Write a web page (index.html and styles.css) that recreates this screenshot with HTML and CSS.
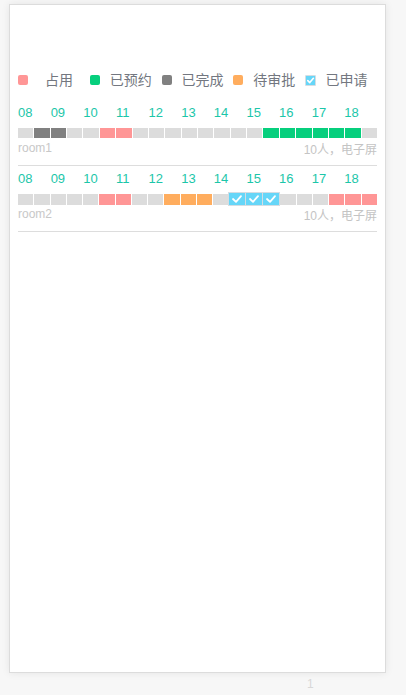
FILE: index.html
```html
<!DOCTYPE html>
<html lang="zh">
<head>
<meta charset="utf-8">
<title>会议室预约</title>
<link rel="stylesheet" href="styles.css">
</head>
<body>
<div class="page">
  <div class="card">
    <div class="legend">
      <div class="legend-item"><span class="sw sw-busy"></span><span class="lbl">占用</span></div>
      <div class="legend-item"><span class="sw sw-booked"></span><span class="lbl">已预约</span></div>
      <div class="legend-item"><span class="sw sw-done"></span><span class="lbl">已完成</span></div>
      <div class="legend-item"><span class="sw sw-pending"></span><span class="lbl">待审批</span></div>
      <div class="legend-item"><span class="sw sw-applied"><svg viewBox="0 0 10 10" class="chk-s"><polyline points="2,5.2 4.2,7.3 8.2,2.6" /></svg></span><span class="lbl">已申请</span></div>
    </div>

    <div class="room">
      <div class="hours">
        <span>08</span><span>09</span><span>10</span><span>11</span><span>12</span><span>13</span><span>14</span><span>15</span><span>16</span><span>17</span><span>18</span>
      </div>
      <div class="bar">
        <span class="seg"></span><span class="seg done"></span><span class="seg done"></span><span class="seg"></span><span class="seg"></span><span class="seg busy"></span><span class="seg busy"></span><span class="seg"></span><span class="seg"></span><span class="seg"></span><span class="seg"></span><span class="seg"></span><span class="seg"></span><span class="seg"></span><span class="seg"></span><span class="seg booked"></span><span class="seg booked"></span><span class="seg booked"></span><span class="seg booked"></span><span class="seg booked"></span><span class="seg booked"></span><span class="seg"></span>
      </div>
      <div class="info"><span class="name">room1</span><span class="desc">10人，电子屏</span></div>
    </div>

    <div class="room">
      <div class="hours">
        <span>08</span><span>09</span><span>10</span><span>11</span><span>12</span><span>13</span><span>14</span><span>15</span><span>16</span><span>17</span><span>18</span>
      </div>
      <div class="bar">
        <span class="seg"></span><span class="seg"></span><span class="seg"></span><span class="seg"></span><span class="seg"></span><span class="seg busy"></span><span class="seg busy"></span><span class="seg"></span><span class="seg"></span><span class="seg pending"></span><span class="seg pending"></span><span class="seg pending"></span><span class="seg"></span>
        <span class="seg applied"><svg viewBox="0 0 16 10" class="chk"><polyline points="4,5 7,7.8 12,2.2" /></svg></span>
        <span class="seg applied"><svg viewBox="0 0 16 10" class="chk"><polyline points="4,5 7,7.8 12,2.2" /></svg></span>
        <span class="seg applied"><svg viewBox="0 0 16 10" class="chk"><polyline points="4,5 7,7.8 12,2.2" /></svg></span>
        <span class="seg"></span><span class="seg"></span><span class="seg"></span><span class="seg busy"></span><span class="seg busy"></span><span class="seg busy"></span>
      </div>
      <div class="info"><span class="name">room2</span><span class="desc">10人，电子屏</span></div>
    </div>
  </div>
  <div class="pager">1</div>
</div>
</body>
</html>
```
FILE: styles.css
```css
html, body {
  margin: 0;
  padding: 0;
  background: #f7f7f7;
}

body {
  font-family: "Liberation Sans", "Noto Sans CJK SC", sans-serif;
}

.page {
  padding: 4px 0 0 9px;
}

.card {
  box-sizing: border-box;
  width: 377px;
  height: 669px;
  background: #fff;
  border: 1px solid #dcdcdc;
  box-shadow: 0 0 8px rgba(0, 0, 0, 0.08);
  padding: 65px 8px 0 8px;
}

.legend {
  display: flex;
  height: 20px;
  margin-bottom: 10px;
}

.legend-item {
  display: flex;
  align-items: center;
  width: 72px;
  flex-shrink: 1;
}

.sw {
  width: 10px;
  height: 10px;
  border-radius: 2px;
  flex: none;
  box-sizing: border-box;
}

.sw-busy { background: #ff9696; }
.sw-booked { background: #06cf7d; }
.sw-done { background: #808080; }
.sw-pending { background: #ffad5e; }
.sw-applied {
  width: 11px;
  height: 11px;
  border-radius: 1px;
  background: #66d6f8;
  border: 1px solid #d6dde2;
  display: flex;
}

.chk-s {
  width: 9px;
  height: 9px;
}

.chk-s polyline, .chk polyline {
  fill: none;
  stroke: #fff;
  stroke-width: 1.8;
  stroke-linecap: round;
  stroke-linejoin: round;
}

.lbl {
  flex: 1;
  text-align: center;
  font-size: 14px;
  line-height: 20px;
  color: #737780;
  white-space: nowrap;
}

.room {
  padding: 4px 0 7px 0;
  border-bottom: 1px solid #dddddd;
}

.hours {
  display: grid;
  grid-template-columns: repeat(11, 1fr);
  font-size: 13px;
  line-height: 18px;
  color: #1cc6a9;
  margin-bottom: 6px;
}

.bar {
  display: grid;
  grid-template-columns: repeat(22, 1fr);
  column-gap: 1px;
  height: 10px;
}

.seg {
  background: #dcdcdc;
  display: flex;
  align-items: center;
  justify-content: center;
  box-sizing: border-box;
}

.seg.busy { background: #ff9696; }
.seg.booked { background: #06cf7d; }
.seg.done { background: #808080; }
.seg.pending { background: #ffad5e; }
.seg.applied {
  background: #66d6f8;
  box-shadow: 0 0 0 1px #d4dde3;
  height: 12px;
  margin-top: -1px;
}

.chk {
  width: 16px;
  height: 10px;
}

.info {
  display: flex;
  justify-content: space-between;
  align-items: flex-start;
  height: 20px;
}

.name {
  font-size: 12px;
  line-height: 20px;
  color: #c8c8c8;
}

.desc {
  font-size: 12px;
  line-height: 20px;
  padding-top: 2px;
  color: #c4c4c4;
}

.pager {
  width: 377px;
  padding-left: 298px;
  box-sizing: border-box;
  font-size: 12px;
  line-height: 16px;
  margin-top: 3px;
  color: #d8d8d8;
}
```
